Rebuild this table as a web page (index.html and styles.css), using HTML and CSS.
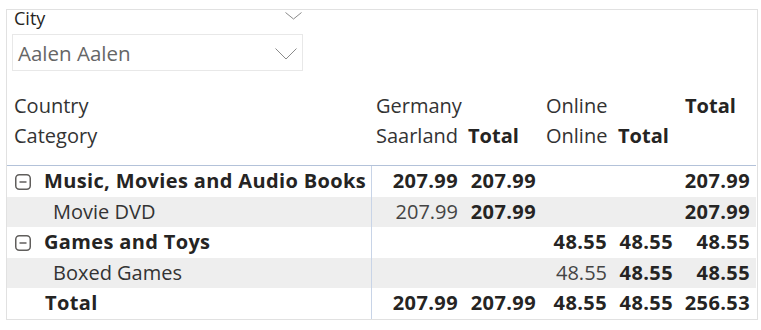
FILE: index.html
```html
<!DOCTYPE html>
<html>
<head>
<meta charset="utf-8">
<link rel="stylesheet" href="styles.css">
</head>
<body>
<div class="visual">
  <div class="slicer">
    <div class="slicer-head">
      <span class="slicer-title">City</span>
      <svg class="chev-top" width="17" height="8" viewBox="0 0 17 8"><polyline points="0.5,0.5 8.5,7 16.5,0.5" fill="none" stroke="#8a8a8a" stroke-width="1"/></svg>
    </div>
    <div class="dropdown">
      <span class="dd-text">Aalen Aalen</span>
      <svg class="chev" width="22" height="12" viewBox="0 0 22 12"><polyline points="0.5,0.5 11,11 21.5,0.5" fill="none" stroke="#8a8a8a" stroke-width="1"/></svg>
    </div>
  </div>
  <table class="matrix">
    <colgroup>
      <col class="c0"><col class="c1"><col class="c2"><col class="c3"><col class="c4"><col class="c5">
    </colgroup>
    <thead>
      <tr class="h1">
        <th class="rh-head">Country</th><th>Germany</th><th></th><th>Online</th><th></th><th class="b">Total</th>
      </tr>
      <tr class="h2">
        <th class="rh-head">Category</th><th>Saarland</th><th class="b">Total</th><th>Online</th><th class="b">Total</th><th></th>
      </tr>
    </thead>
    <tbody>
      <tr>
        <td class="rh grp"><svg class="tog" width="16" height="16" viewBox="0 0 16 16"><rect x="0.75" y="0.75" width="14.5" height="14.5" rx="3.5" fill="none" stroke="#605e5c" stroke-width="1.5"/><line x1="4.5" y1="8" x2="11.5" y2="8" stroke="#605e5c" stroke-width="1.5"/></svg>Music, Movies and Audio Books</td>
        <td class="b">207.99</td><td class="b">207.99</td><td></td><td></td><td class="b">207.99</td>
      </tr>
      <tr class="alt">
        <td class="rh child">Movie DVD</td>
        <td>207.99</td><td class="b">207.99</td><td></td><td></td><td class="b">207.99</td>
      </tr>
      <tr>
        <td class="rh grp"><svg class="tog" width="16" height="16" viewBox="0 0 16 16"><rect x="0.75" y="0.75" width="14.5" height="14.5" rx="3.5" fill="none" stroke="#605e5c" stroke-width="1.5"/><line x1="4.5" y1="8" x2="11.5" y2="8" stroke="#605e5c" stroke-width="1.5"/></svg>Games and Toys</td>
        <td></td><td></td><td class="b">48.55</td><td class="b">48.55</td><td class="b">48.55</td>
      </tr>
      <tr class="alt">
        <td class="rh child">Boxed Games</td>
        <td></td><td></td><td>48.55</td><td class="b">48.55</td><td class="b">48.55</td>
      </tr>
      <tr class="total">
        <td class="rh tot">Total</td>
        <td class="b">207.99</td><td class="b">207.99</td><td class="b">48.55</td><td class="b">48.55</td><td class="b">256.53</td>
      </tr>
    </tbody>
  </table>
</div>
</body>
</html>
```
FILE: styles.css
```css
body {
  margin: 0;
  background: #ffffff;
  font-family: "Open Sans", "Noto Sans", sans-serif;
}

.visual {
  margin: 9px 0 0 6px;
  width: 752px;
  height: 311px;
  box-sizing: border-box;
  border: 1px solid #e1e1e1;
}

.slicer-head {
  box-sizing: border-box;
  height: 24px;
  width: 296px;
  padding-left: 7px;
  display: flex;
  justify-content: space-between;
  align-items: flex-start;
}

.slicer-title {
  font-size: 18px;
  line-height: 18px;
  margin-top: -1px;
  color: #252423;
}

.chev-top {
  display: block;
  margin-top: 1.5px;
  margin-right: 1px;
}

.dropdown {
  margin-left: 5px;
  width: 291px;
  height: 37px;
  box-sizing: border-box;
  border: 1px solid #e8e8e8;
  display: flex;
  align-items: center;
  justify-content: space-between;
  padding: 2px 5px 0 5px;
}

.dd-text {
  font-size: 20.5px;
  line-height: 1;
  color: #666666;
}

.chev {
  display: block;
}

.matrix {
  margin-top: 19.5px;
  width: 749px;
  table-layout: fixed;
  border-collapse: collapse;
  font-size: 20px;
}

.c0 { width: 364px; }
.c1 { width: 92px; }
.c2 { width: 78px; }
.c3 { width: 72px; }
.c4 { width: 66px; }
.c5 { width: 77px; }

.matrix th,
.matrix td {
  padding: 0;
  line-height: 30.5px;
  white-space: nowrap;
  overflow: visible;
}

.matrix th {
  font-weight: 400;
  text-align: left;
  color: #333333;
  padding-left: 5px;
}

.matrix th.rh-head {
  padding-left: 7px;
}

.matrix th:nth-child(6) {
  padding-left: 6px;
}

.matrix .h1 th {
  line-height: 30px;
}

.matrix .h2 th {
  line-height: 30px;
  padding-bottom: 14.5px;
  border-bottom: 1px solid #b3c2d9;
}

.matrix th.b {
  font-weight: 700;
  color: #252423;
}

.matrix td.b {
  font-weight: 700;
  color: #252423;
  letter-spacing: 0.4px;
}

.matrix td {
  text-align: right;
  color: #444444;
  padding-right: 5px;
}

.matrix td:nth-child(4),
.matrix td:nth-child(5),
.matrix td:nth-child(6) {
  padding-right: 6px;
}

.matrix td.rh {
  text-align: left;
  color: #252423;
  border-right: 1px solid #c8d4e7;
  padding-right: 0;
}

.matrix td.grp {
  font-weight: 700;
  letter-spacing: 0.35px;
  padding-left: 8px;
}

.matrix td.child {
  padding-left: 46px;
  color: #333333;
}

.matrix td.tot {
  font-weight: 700;
  letter-spacing: 0.4px;
  padding-left: 38px;
}

.tog {
  display: inline-block;
  vertical-align: -2px;
  margin-right: 13px;
}

.matrix tr.alt td {
  background: #eeeeee;
}
```
